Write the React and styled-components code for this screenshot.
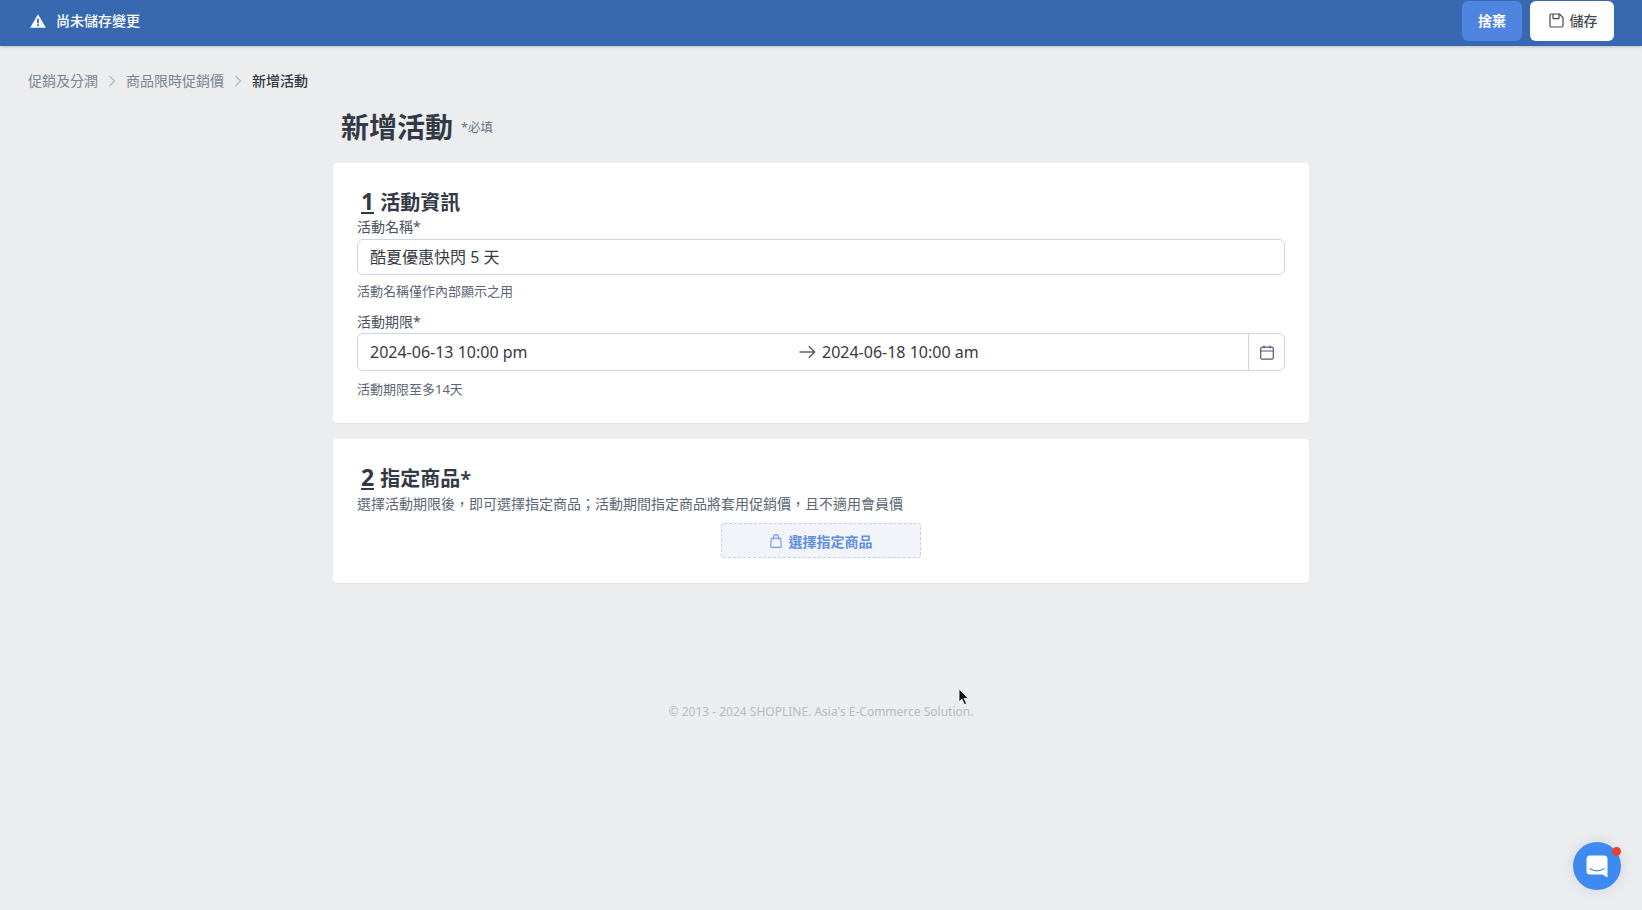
import React from "react";
import styled, { createGlobalStyle } from "styled-components";

const FONT = `"Noto Sans", "Noto Sans CJK TC", "Liberation Sans", sans-serif`;

const Global = createGlobalStyle`
  html, body { margin: 0; padding: 0; background: #ebedef; }
  * { box-sizing: border-box; }
  body { font-family: ${FONT}; color: #333a45; }
`;

const Page = styled.div`
  position: relative;
  height: 910px;
  overflow: hidden;
  background: #ebedef;
`;

const TopBar = styled.header`
  height: 46px;
  display: flex;
  align-items: center;
  justify-content: space-between;
  padding: 0 28px 4px 30px;
  background: #3869b0;
  box-shadow: 0 1px 3px rgba(0, 0, 0, 0.2);
`;

const Notice = styled.div`
  display: flex;
  align-items: center;
  gap: 10px;
  color: #fff;
  font-size: 14px;
  font-weight: 500;
  line-height: 20px;
`;

const Actions = styled.div`
  display: flex;
  gap: 8px;
`;

const BarButton = styled.button`
  height: 40px;
  width: ${(p) => p.$w}px;
  display: flex;
  align-items: center;
  justify-content: center;
  gap: 6px;
  border: 0;
  border-radius: 6px;
  padding: 0 0 3px ${(p) => (p.$primary ? 0 : 2)}px;
  font-family: ${FONT};
  font-size: 14px;
  font-weight: ${(p) => (p.$primary ? 700 : 500)};
  color: ${(p) => (p.$primary ? "#fff" : "#454b55")};
  background: ${(p) => (p.$primary ? "#4f84e0" : "#fff")};

  svg {
    margin-top: 2px;
  }
`;

const Crumbs = styled.nav`
  display: flex;
  align-items: center;
  padding: 25px 0 0 28px;
  height: 45px;
  font-size: 14px;
  line-height: 20px;
`;

const Crumb = styled.span`
  color: ${(p) => (p.$current ? "#333a45" : "#7b8594")};
  font-weight: ${(p) => (p.$current ? 500 : 400)};
`;

const CrumbArrow = styled.svg`
  width: 8px;
  height: 12px;
  margin: 0 10px 0 10px;
  flex: none;
`;

const Main = styled.main`
  width: 976px;
  margin: 0 auto;
`;

const TitleRow = styled.div`
  display: flex;
  align-items: center;
  gap: 8px;
  height: 40px;
  margin: 16px 0 16px;
  padding-left: 8px;
`;

const Title = styled.h1`
  margin: 0;
  font-size: 28px;
  line-height: 40px;
  font-weight: 700;
  color: #333a45;
`;

const Required = styled.span`
  font-size: 12.5px;
  line-height: 20px;
  padding-top: 2px;
  color: #6c7686;
`;

const Card = styled.section`
  background: #fff;
  border-radius: 4px;
  padding: 24px 24px ${(p) => p.$bottom}px;
  margin-bottom: 16px;
  box-shadow: 0 1px 1px rgba(40, 50, 70, 0.05);
`;

const Heading = styled.h2`
  display: flex;
  align-items: center;
  margin: 0;
  height: 30px;
  padding: 2px 0 0 4px;
  gap: 6px;
  font-size: 20px;
  line-height: 28px;
  font-weight: 600;
  color: #333a45;
`;

const StepNumber = styled.span`
  display: inline-block;
  font-size: 23px;
  font-weight: 700;
  line-height: 17px;
  height: 21px;
  padding-bottom: 2px;
  border-bottom: 2px solid #333a45;
`;

const Label = styled.div`
  margin-top: ${(p) => p.$top}px;
  font-size: 14px;
  line-height: 16px;
  color: #4a5260;
`;

const TextBox = styled.div`
  display: flex;
  align-items: center;
  height: 36px;
  margin-top: 4px;
  padding: 0 12px 2px;
  border: 1px solid #ccd5e3;
  border-radius: 6px;
  font-size: 16px;
  color: #333a45;
`;

const Help = styled.div`
  margin-top: ${(p) => p.$top}px;
  font-size: 13px;
  line-height: 20px;
  color: #5d6676;
`;

const DateBox = styled.div`
  display: flex;
  align-items: stretch;
  height: 38px;
  margin-top: 3px;
  border: 1px solid #ccd5e3;
  border-radius: 6px;
  font-size: 16px;
  color: #333a45;
`;

const DateRange = styled.div`
  flex: 1;
  display: grid;
  grid-template-columns: 429px 1fr;
  align-items: center;
  padding-left: 12px;
`;

const DateEnd = styled.div`
  display: flex;
  align-items: center;
  gap: 6px;
`;

const CalendarCell = styled.div`
  flex: none;
  width: 36px;
  display: flex;
  align-items: center;
  justify-content: center;
  border-left: 1px solid #ccd5e3;
`;

const Description = styled.p`
  margin: 1px 0 0;
  font-size: 14px;
  line-height: 20px;
  color: #5d6676;
`;

const PickRow = styled.div`
  display: flex;
  justify-content: center;
  margin-top: 9px;
`;

const PickButton = styled.button`
  width: 200px;
  height: 35px;
  display: flex;
  align-items: center;
  justify-content: center;
  gap: 7px;
  padding: 0;
  background: #f2f4f9;
  border: 1px dashed #bcd0ee;
  border-radius: 3px;
  color: #5f8fe0;
  font-family: ${FONT};
  font-size: 14px;
  font-weight: 600;
`;

const Footer = styled.footer`
  margin-top: 119px;
  text-align: center;
  font-size: 12px;
  line-height: 20px;
  color: #b6bbc2;
`;

const ChatBubble = styled.div`
  position: absolute;
  left: 1573px;
  top: 842px;
  width: 48px;
  height: 48px;
  display: flex;
  align-items: center;
  justify-content: center;
  border-radius: 50%;
  background: #3d8bf0;
  box-shadow: 0 0 14px rgba(60, 70, 90, 0.14);
`;

const ChatDot = styled.span`
  position: absolute;
  top: 5px;
  right: 0;
  width: 9px;
  height: 9px;
  border-radius: 50%;
  background: #ef4036;
`;

const Cursor = styled.svg`
  position: absolute;
  left: 958px;
  top: 688px;
  width: 12px;
  height: 18px;
`;

const Warning = () => (
  <svg width="16" height="14" viewBox="0 0 16 14">
    <path d="M8 0.3 L15.8 13.7 H0.2 Z" fill="#fff" />
    <rect x="7.1" y="4.6" width="1.8" height="4.8" fill="#3869b0" />
    <rect x="7.1" y="10.3" width="1.8" height="1.8" fill="#3869b0" />
  </svg>
);

const SaveIcon = () => (
  <svg width="15" height="15" viewBox="0 0 15 15" fill="none" stroke="#3f4651" strokeWidth="1.2" strokeLinejoin="round">
    <path d="M1 2.2 A1.2 1.2 0 0 1 2.2 1 H10.4 L14 4.6 V12.8 A1.2 1.2 0 0 1 12.8 14 H2.2 A1.2 1.2 0 0 1 1 12.8 Z" />
    <path d="M4 1 V5 A0.6 0.6 0 0 0 4.6 5.6 H9.4 A0.6 0.6 0 0 0 10 5 V1" />
  </svg>
);

const Chevron = () => (
  <CrumbArrow viewBox="0 0 8 12" fill="none" stroke="#b3bac4" strokeWidth="1.3">
    <path d="M1.5 1 L6.5 6 L1.5 11" />
  </CrumbArrow>
);

const ArrowIcon = () => (
  <svg width="17" height="14" viewBox="0 0 17 14" fill="none" stroke="#5a6376" strokeWidth="1.6">
    <path d="M0.5 7 H15.5 M9.8 1.2 L15.6 7 L9.8 12.8" />
  </svg>
);

const CalendarIcon = () => (
  <svg width="14" height="15" viewBox="0 0 14 15" fill="none" stroke="#4f5a70" strokeWidth="1.2">
    <rect x="0.7" y="2.2" width="12.6" height="12" rx="1.6" />
    <path d="M0.7 6 H13.3 M4 0.4 V3.2 M10 0.4 V3.2" />
  </svg>
);

const BagIcon = () => (
  <svg width="12" height="14" viewBox="0 0 12 14" fill="none" stroke="#6f9ae2" strokeWidth="1.1">
    <path d="M1.3 4.2 H10.7 L11.3 12.4 A1 1 0 0 1 10.3 13.4 H1.7 A1 1 0 0 1 0.7 12.4 Z" />
    <path d="M3.6 5.6 V3 A2.4 2.4 0 0 1 8.4 3 V5.6" />
  </svg>
);

const ChatIcon = () => (
  <svg width="22" height="23" viewBox="0 0 22 23">
    <path d="M4 0.5 H18 A3.5 3.5 0 0 1 21.5 4 V22.5 L16.5 19.5 H4 A3.5 3.5 0 0 1 0.5 16 V4 A3.5 3.5 0 0 1 4 0.5 Z" fill="#fff" />
    <path d="M4 13.8 C8 16.5 14 16.5 18 13.8" fill="none" stroke="#3d8bf0" strokeWidth="1.2" strokeLinecap="round" />
  </svg>
);

export default function App() {
  return (
    <Page>
      <Global />
      <TopBar>
        <Notice>
          <Warning />
          尚未儲存變更
        </Notice>
        <Actions>
          <BarButton $primary $w={60}>捨棄</BarButton>
          <BarButton $w={84}>
            <SaveIcon />
            儲存
          </BarButton>
        </Actions>
      </TopBar>
      <Crumbs>
        <Crumb>促銷及分潤</Crumb>
        <Chevron />
        <Crumb>商品限時促銷價</Crumb>
        <Chevron />
        <Crumb $current>新增活動</Crumb>
      </Crumbs>
      <Main>
        <TitleRow>
          <Title>新增活動</Title>
          <Required>*必填</Required>
        </TitleRow>
        <Card $bottom={24}>
          <Heading>
            <StepNumber>1</StepNumber>
            活動資訊
          </Heading>
          <Label $top={2}>活動名稱*</Label>
          <TextBox>酷夏優惠快閃 5 天</TextBox>
          <Help $top={6}>活動名稱僅作內部顯示之用</Help>
          <Label $top={13}>活動期限*</Label>
          <DateBox>
            <DateRange>
              <span>2024-06-13 10:00 pm</span>
              <DateEnd>
                <ArrowIcon />
                2024-06-18 10:00 am
              </DateEnd>
            </DateRange>
            <CalendarCell>
              <CalendarIcon />
            </CalendarCell>
          </DateBox>
          <Help $top={8}>活動期限至多14天</Help>
        </Card>
        <Card $bottom={25}>
          <Heading>
            <StepNumber>2</StepNumber>
            指定商品*
          </Heading>
          <Description>選擇活動期限後，即可選擇指定商品；活動期間指定商品將套用促銷價，且不適用會員價</Description>
          <PickRow>
            <PickButton>
              <BagIcon />
              選擇指定商品
            </PickButton>
          </PickRow>
        </Card>
        <Footer>© 2013 - 2024 SHOPLINE. Asia's E-Commerce Solution.</Footer>
      </Main>
      <ChatBubble>
        <ChatIcon />
        <ChatDot />
      </ChatBubble>
      <Cursor viewBox="0 0 12 18">
        <path d="M1 1 V14 L4 11.2 L6.4 16.6 L8.6 15.6 L6.2 10.4 H10.4 Z" fill="#111" stroke="#fff" strokeWidth="0.8" />
      </Cursor>
    </Page>
  );
}
